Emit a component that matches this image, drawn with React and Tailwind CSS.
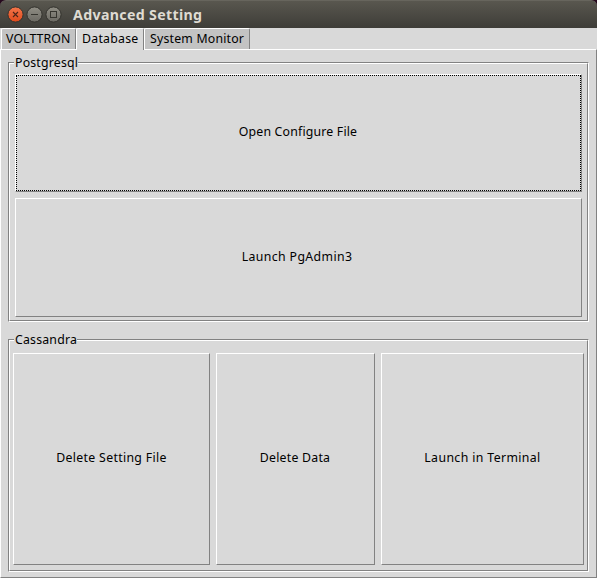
import React from "react";

const raised =
  "border border-t-white border-l-white border-r-[#828282] border-b-[#828282] bg-[#d9d9d9]";

function WindowButton({ kind }) {
  const close = kind === "close";
  return (
    <svg className="block h-[17px] w-[17px]" viewBox="0 0 17 17">
      <defs>
        <linearGradient id={"fill-" + kind} x1="0" y1="0" x2="0" y2="1">
          <stop offset="0" stopColor={close ? "#f4764b" : "#908e85"} />
          <stop offset="1" stopColor={close ? "#df4a1b" : "#6b6962"} />
        </linearGradient>
      </defs>
      <circle cx="8.5" cy="8.5" r="7.6" fill={"url(#fill-" + kind + ")"} stroke="#34332e" strokeWidth="1" />
      {close && <path d="M6 6l5 5M11 6l-5 5" stroke="#4b2519" strokeWidth="1.1" fill="none" />}
      {kind === "min" && <path d="M5 8.5h7" stroke="#36352f" strokeWidth="1" />}
      {kind === "max" && <rect x="5.5" y="5.5" width="6" height="6" fill="none" stroke="#36352f" strokeWidth="1" />}
    </svg>
  );
}

function Tab({ label, selected, className }) {
  return (
    <div
      className={
        "relative flex items-center whitespace-nowrap rounded-t-[2px] border-l border-r border-t border-l-white border-r-[#828282] border-t-white " +
        (selected ? "z-10 h-[22px] bg-[#d9d9d9] pb-px " : "h-[21px] bg-[#c3c3c3] ") +
        className
      }
    >
      {label}
    </div>
  );
}

function Group({ title, className, children }) {
  return (
    <section
      className={
        "relative flex border border-b-white border-l-[#828282] border-r-white border-t-[#828282] " + className
      }
    >
      <div className="flex flex-1 flex-col border border-b-[#828282] border-l-white border-r-[#828282] border-t-white">
        {children}
      </div>
      <h2 className="absolute -top-[9px] left-[5px] h-[18px] bg-[#d9d9d9] pl-px leading-[18px] tracking-[0.2px]">
        {title}
      </h2>
    </section>
  );
}

function Button({ label, focused, className }) {
  return (
    <button className={"flex items-stretch " + raised + " " + className}>
      <span
        className={
          "flex flex-1 items-center justify-center whitespace-nowrap " +
          (focused ? "border border-dotted border-black pb-[2px] pr-px" : "pb-[2px]")
        }
      >
        {label}
      </span>
    </button>
  );
}

export default function App() {
  return (
    <div className="flex h-[578px] w-[597px] flex-col overflow-hidden bg-[#d9d9d9] font-['Noto_Sans',sans-serif] text-[12.3px] leading-[18px] text-black">
      <div className="h-7 shrink-0 bg-[#26091d]">
        <div className="flex h-7 items-center rounded-t-[6px] border-t border-[#67655d] bg-linear-to-b from-[#59574f] to-[#3e3d38] pl-[7px]">
          <div className="flex gap-[2px]">
            <WindowButton kind="close" />
            <WindowButton kind="min" />
            <WindowButton kind="max" />
          </div>
          <div className="ml-[11px] whitespace-nowrap text-[14.2px] font-bold tracking-[0.33px] text-[#dfdbd2]">
            Advanced Setting
          </div>
        </div>
      </div>
      <div className="flex h-[21px] shrink-0 pl-px">
        <Tab label="VOLTTRON" className="w-[75px] pl-1 tracking-[0.12px]" />
        <Tab label="Database" selected className="w-[68px] pl-[5px] tracking-[0.25px]" />
        <Tab label="System Monitor" className="w-[106px] pl-[5px] tracking-[0.2px]" />
      </div>
      <div className="flex min-h-0 flex-1 flex-col border border-b-[#828282] border-l-white border-r-[#828282] border-t-white pl-[7px] pt-3">
        <Group title="Postgresql" className="h-[260px] w-[581px] shrink-0">
          <div className="flex flex-col gap-[6px] pl-[5px] pt-[10px]">
            <Button label="Open Configure File" focused className="h-[118px] w-[567px] tracking-[0.19px]" />
            <Button label="Launch PgAdmin3" className="h-[119px] w-[567px] pr-[3px] tracking-[0.38px]" />
          </div>
        </Group>
        <Group title="Cassandra" className="mt-[17px] h-[233px] w-[581px] shrink-0">
          <div className="flex gap-[6px] pl-[3px] pt-3">
            <Button label="Delete Setting File" className="h-[212px] w-[197px] tracking-[0.32px]" />
            <Button label="Delete Data" className="h-[212px] w-[159px] pr-px tracking-[0.24px]" />
            <Button label="Launch in Terminal" className="h-[212px] w-[203px] tracking-[0.38px]" />
          </div>
        </Group>
      </div>
    </div>
  );
}
